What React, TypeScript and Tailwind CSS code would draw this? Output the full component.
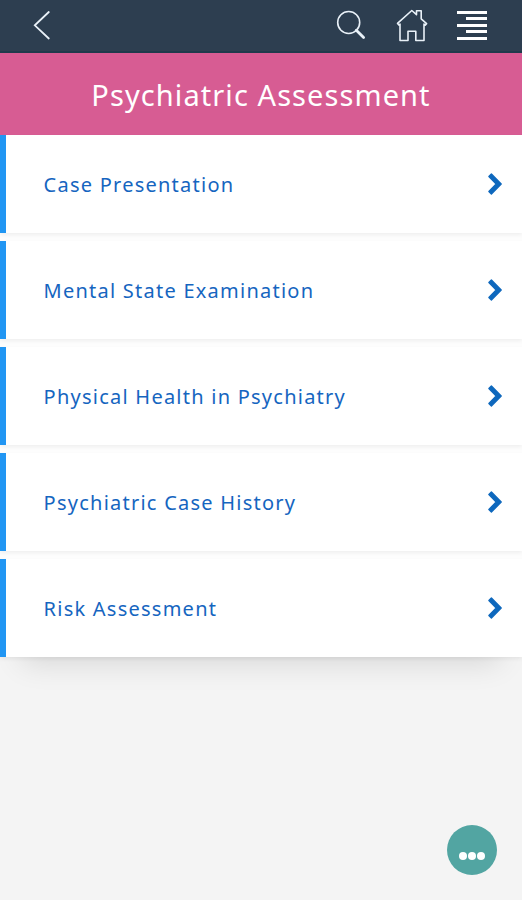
import React from "react";

const items: string[] = [
  "Case Presentation",
  "Mental State Examination",
  "Physical Health in Psychiatry",
  "Psychiatric Case History",
  "Risk Assessment",
];

function TopBar() {
  return (
    <header className="flex h-[53.4px] shrink-0 items-start border-b-2 border-[#1f3a4c] bg-[#2d3e50] pr-[35px] pl-[33px] text-[#e9f1f8]">
      <button aria-label="Back" className="mt-[10px]">
        <svg width="18" height="31" viewBox="0 0 18 31" fill="none" stroke="currentColor" strokeWidth="1.8" strokeLinecap="round">
          <path d="M15.8 2 L1.8 15.3 L15.8 28.5" />
        </svg>
      </button>
      <button aria-label="Search" className="mt-[9px] ml-auto">
        <svg width="30" height="32" viewBox="0 0 30 32" fill="none" stroke="currentColor" strokeLinecap="round">
          <circle cx="12.7" cy="13.5" r="11" strokeWidth="1.6" />
          <path d="M20.3 21.3 L27.6 28.6" strokeWidth="2.8" />
        </svg>
      </button>
      <button aria-label="Home" className="mt-[8px] ml-[30px]">
        <svg width="32" height="35" viewBox="0 0 32 35" fill="none" stroke="currentColor" strokeWidth="1.6" strokeLinejoin="round">
          <path d="M1.5 15.3 L15.8 2.5 L20.5 6.6 V2.8 H25.2 V10.8 L30.6 15.6 L29.2 17.1 L28 16 V32.5 H19.8 V23.3 H12 V32.5 H4 V16 L2.8 17 Z" />
        </svg>
      </button>
      <button aria-label="Menu" className="mt-[11px] ml-[29px] flex w-[30px] flex-col items-end gap-[3.4px]">
        <span className="h-[3px] w-full bg-white" />
        <span className="h-[3px] w-[21px] bg-white" />
        <span className="h-[3px] w-full bg-white" />
        <span className="h-[3px] w-[21px] bg-white" />
        <span className="h-[3px] w-full bg-white" />
      </button>
    </header>
  );
}

function Row({ label }: { label: string }) {
  return (
    <li className="flex h-[98.3px] items-center border-l-[6px] border-[#2196f3] bg-white pr-[19px] pl-[37.6px] shadow-[0_2px_4px_rgba(0,0,0,0.06)]">
      <span className="pt-[2px] text-[20px] leading-[28px] tracking-[1.24px] text-[#1565c0]">{label}</span>
      <svg className="ml-auto" width="16" height="24" viewBox="0 0 16 24" fill="#0e68bd" stroke="#0e68bd" strokeWidth="1.4" strokeLinejoin="round">
        <path d="M1.9 4.5 L4.4 2 L14.2 12 L4.4 22 L1.9 19.5 L9.2 12 Z" />
      </svg>
    </li>
  );
}

export default function App() {
  return (
    <div className="relative flex h-[900px] w-full flex-col overflow-hidden bg-[#f4f4f4] font-['Noto_Sans',sans-serif]">
      <TopBar />
      <h1 className="flex h-[81.6px] shrink-0 items-center justify-center bg-[#d75c93] pt-[1px] text-[29px] leading-[40px] tracking-[1.08px] text-white">
        Psychiatric Assessment
      </h1>
      <ul className="flex flex-col gap-[7.6px] bg-[#fdfdfd] shadow-[0_28px_28px_-22px_rgba(0,0,0,0.12)]">
        {items.map((label) => (
          <Row key={label} label={label} />
        ))}
      </ul>
      <button aria-label="More options" className="absolute right-[25px] bottom-[25px] flex h-[50px] w-[50px] items-center justify-center gap-[0.6px] rounded-full bg-[#52a5a2] pt-[12px]">
        <span className="h-[8.4px] w-[8.4px] rounded-full bg-white" />
        <span className="h-[8.4px] w-[8.4px] rounded-full bg-white" />
        <span className="h-[8.4px] w-[8.4px] rounded-full bg-white" />
      </button>
    </div>
  );
}
